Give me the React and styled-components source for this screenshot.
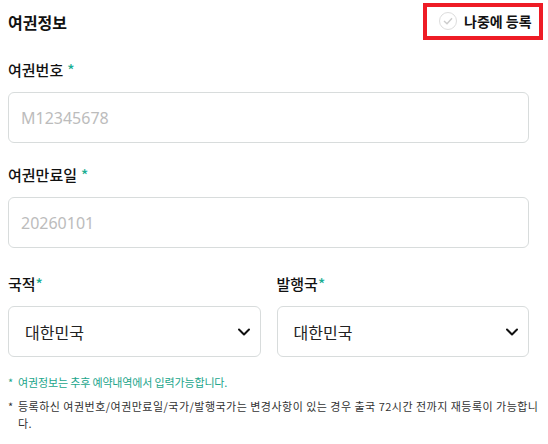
import React from "react";
import styled, { createGlobalStyle } from "styled-components";

const GlobalStyle = createGlobalStyle`
  body {
    margin: 0;
    background: #fff;
    font-family: "Noto Sans CJK KR", "Noto Sans", sans-serif;
    color: #222;
  }
`;

const Wrap = styled.div`
  width: 548px;
  padding: 0 19px 0 8px;
  box-sizing: border-box;
`;

const Header = styled.div`
  height: 44px;
  display: flex;
  align-items: center;
  justify-content: space-between;
`;

const Title = styled.h2`
  margin: 0;
  font-size: 16px;
  font-weight: 700;
  color: #111;
`;

// 나중에 등록 버튼 (빨간 테두리 강조)
const LaterButton = styled.button`
  margin-right: -14px;
  margin-top: -2px;
  height: 37px;
  width: 120px;
  border: 4px solid #ee1c25;
  background: #fff;
  display: flex;
  align-items: center;
  gap: 7px;
  padding: 0 0 0 12px;
  font-family: inherit;
  font-size: 14px;
  font-weight: 700;
  color: #111;
  cursor: pointer;
`;

const CheckCircle = styled.span`
  width: 18px;
  height: 18px;
  border-radius: 50%;
  border: 1.5px solid #ddd;
  box-sizing: border-box;
  display: flex;
  align-items: center;
  justify-content: center;
`;

const Form = styled.div`
  display: flex;
  flex-direction: column;
`;

const Field = styled.div`
  display: flex;
  flex-direction: column;
  margin-top: ${({ top }) => top}px;
  flex: 1;
`;

const Label = styled.label`
  font-size: 15px;
  font-weight: 500;
  line-height: 20px;
  color: #111;
  margin-bottom: 12px;
`;

const Star = styled.span`
  color: #1aae93;
  margin-left: ${({ gap }) => (gap ? "4px" : "0")};
`;

const Input = styled.input`
  height: 51px;
  box-sizing: border-box;
  border: 1px solid #d8dcdc;
  border-radius: 6px;
  padding: 0 12px;
  font-family: "Noto Sans", sans-serif;
  font-size: 16px;
  color: #222;
  outline: none;
  &::placeholder {
    color: #bcbcbc;
  }
`;

const Row = styled.div`
  display: flex;
  gap: 16px;
  margin-top: 26px;
`;

const Select = styled.div`
  height: 51px;
  box-sizing: border-box;
  border: 1px solid #d8dcdc;
  border-radius: 6px;
  padding: 0 9px 0 16px;
  display: flex;
  align-items: center;
  justify-content: space-between;
  font-size: 16px;
  color: #222;
`;

const Notes = styled.ul`
  list-style: none;
  margin: 17px -11px 0 0;
  padding: 0;
  font-size: 11px;
  line-height: 17px;
  word-break: break-all;
`;

const Note = styled.li`
  position: relative;
  padding-left: 10px;
  margin-bottom: 7px;
  letter-spacing: ${({ spread }) => spread}px;
  color: ${({ green }) => (green ? "#22a58b" : "#333")};
  &::before {
    content: "*";
    position: absolute;
    left: 0;
    top: 0;
  }
`;

const Chevron = () => (
  <svg width="14" height="14" viewBox="0 0 14 14">
    <path d="M2 4.5 L7 9.5 L12 4.5" fill="none" stroke="#111" strokeWidth="2" strokeLinecap="round" strokeLinejoin="round" />
  </svg>
);

const App = () => {
  return (
    <>
      <GlobalStyle />
      <Wrap>
        <Header>
          <Title>여권정보</Title>
          <LaterButton>
            <CheckCircle>
              <svg width="10" height="8" viewBox="0 0 10 8">
                <path d="M1 4 L4 6.8 L9 1.2" fill="none" stroke="#ccc" strokeWidth="1.4" />
              </svg>
            </CheckCircle>
            나중에 등록
          </LaterButton>
        </Header>
        <Form>
          <Field top={16}>
            <Label>
              여권번호<Star gap>*</Star>
            </Label>
            <Input placeholder="M12345678" />
          </Field>
          <Field top={22}>
            <Label>
              여권만료일<Star gap>*</Star>
            </Label>
            <Input placeholder="20260101" />
          </Field>
          <Row>
            <Field top={0}>
              <Label>
                국적<Star>*</Star>
              </Label>
              <Select>
                대한민국
                <Chevron />
              </Select>
            </Field>
            <Field top={0}>
              <Label>
                발행국<Star>*</Star>
              </Label>
              <Select>
                대한민국
                <Chevron />
              </Select>
            </Field>
          </Row>
        </Form>
        <Notes>
          <Note green spread={-0.15}>
            여권정보는 추후 예약내역에서 입력가능합니다.
          </Note>
          <Note spread={0.48}>
            등록하신 여권번호/여권만료일/국가/발행국가는 변경사항이 있는 경우 출국 72시간 전까지 재등록이 가능합니다.
          </Note>
        </Notes>
      </Wrap>
    </>
  );
};

export default App;
